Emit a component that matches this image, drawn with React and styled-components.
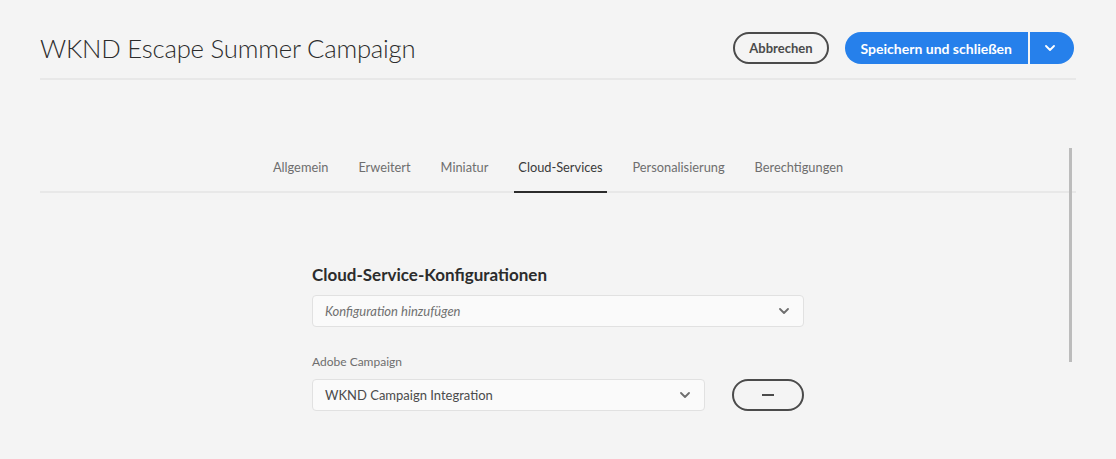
import React, { useState } from "react";
import styled, { createGlobalStyle } from "styled-components";

const GlobalStyle = createGlobalStyle`
  html, body {
    margin: 0;
    padding: 0;
    background: #f4f4f4;
  }
  body {
    font-family: "Lato", "Open Sans", "Liberation Sans", sans-serif;
    color: #2c2c2c;
  }
`;

const Chevron = ({ color = "#6e6e6e", size = 10 }) => (
  <svg width={size} height={size * 0.6} viewBox="0 0 10 6" fill="none">
    <path
      d="M1 1 L5 5 L9 1"
      stroke={color}
      strokeWidth="1.8"
      strokeLinecap="round"
      strokeLinejoin="round"
    />
  </svg>
);

const App = () => {
  const [selectedTab, setSelectedTab] = useState("Cloud-Services");

  const tabs = [
    "Allgemein",
    "Erweitert",
    "Miniatur",
    "Cloud-Services",
    "Personalisierung",
    "Berechtigungen",
  ];

  return (
    <Page>
      <GlobalStyle />
      <Header>
        <Title>WKND Escape Summer Campaign</Title>
        <Actions>
          <OutlineButton>Abbrechen</OutlineButton>
          <SplitButton>
            <PrimaryButton>Speichern und schließen</PrimaryButton>
            <PrimaryToggle aria-label="Mehr">
              <Chevron color="#fff" />
            </PrimaryToggle>
          </SplitButton>
        </Actions>
      </Header>

      <TabBar>
        {tabs.map((tab) => (
          <Tab
            key={tab}
            $active={selectedTab === tab}
            onClick={() => setSelectedTab(tab)}
          >
            {tab}
          </Tab>
        ))}
      </TabBar>

      <Content>
        <SectionHeading>Cloud-Service-Konfigurationen</SectionHeading>
        <Select>
          <SelectText $placeholder>Konfiguration hinzufügen</SelectText>
          <Chevron />
        </Select>

        <FieldLabel>Adobe Campaign</FieldLabel>
        <FieldRow>
          <Select $width="394px">
            <SelectText>WKND Campaign Integration</SelectText>
            <Chevron />
          </Select>
          <RemoveButton aria-label="Entfernen">
            <Minus />
          </RemoveButton>
        </FieldRow>
      </Content>

      <ScrollThumb />
    </Page>
  );
};

const Page = styled.div`
  position: relative;
  height: 459px;
  padding: 0 40px;
  overflow: hidden;
`;

const Header = styled.header`
  display: flex;
  align-items: center;
  justify-content: space-between;
  height: 32px;
  padding: 32px 2px 14px 0;
  border-bottom: 2px solid #e8e8e8;
`;

const Title = styled.h1`
  margin: 0;
  font-size: 25.7px;
  font-weight: 300;
  color: #2c2c2c;
  letter-spacing: -0.2px;
`;

const Actions = styled.div`
  display: flex;
  align-items: center;
  gap: 16px;
`;

const OutlineButton = styled.button`
  height: 32px;
  padding: 0 14px;
  border: 2px solid #4b4b4b;
  border-radius: 16px;
  background: transparent;
  color: #4b4b4b;
  font-family: inherit;
  font-size: 13px;
  font-weight: 700;
  cursor: pointer;
`;

const SplitButton = styled.div`
  display: flex;
  height: 32px;
  gap: 2px;
`;

const PrimaryButton = styled.button`
  height: 32px;
  padding: 0 16px;
  border: none;
  border-radius: 16px 0 0 16px;
  background: #2680eb;
  color: #fff;
  font-family: inherit;
  font-size: 14px;
  font-weight: 700;
  cursor: pointer;
`;

const PrimaryToggle = styled.button`
  display: flex;
  align-items: center;
  justify-content: center;
  width: 44px;
  height: 32px;
  padding: 0 4px 0 0;
  border: none;
  border-radius: 0 16px 16px 0;
  background: #2680eb;
  cursor: pointer;
`;

const TabBar = styled.nav`
  display: flex;
  justify-content: center;
  gap: 22px;
  margin-top: 63px;
  border-bottom: 2px solid #e8e8e8;
`;

const Tab = styled.div`
  display: flex;
  align-items: center;
  height: 48px;
  padding: 0 4px;
  margin-bottom: -2px;
  border-bottom: 2px solid ${(props) => (props.$active ? "#2c2c2c" : "transparent")};
  color: ${(props) => (props.$active ? "#3a3a3a" : "#6e6e6e")};
  font-size: 12.8px;
  cursor: pointer;
`;

const Content = styled.section`
  width: 492px;
  margin: 72px auto 0;
`;

const SectionHeading = styled.h2`
  margin: 0 0 10px;
  font-size: 17px;
  font-weight: 700;
  line-height: 20px;
  color: #2c2c2c;
`;

const Select = styled.div`
  display: flex;
  align-items: center;
  justify-content: space-between;
  box-sizing: border-box;
  width: ${(props) => props.$width || "100%"};
  height: 32px;
  padding: 0 14px 0 12px;
  border: 1px solid #e1e1e1;
  border-radius: 4px;
  background: #fafafa;
`;

const SelectText = styled.span`
  font-size: 13px;
  font-style: ${(props) => (props.$placeholder ? "italic" : "normal")};
  color: ${(props) => (props.$placeholder ? "#707070" : "#4b4b4b")};
`;

const FieldLabel = styled.div`
  margin: 27px 0 10px;
  font-size: 12px;
  line-height: 15px;
  color: #6e6e6e;
`;

const FieldRow = styled.div`
  display: flex;
  align-items: center;
  gap: 27px;
`;

const RemoveButton = styled.button`
  display: flex;
  align-items: center;
  justify-content: center;
  width: 72px;
  height: 32px;
  border: 2px solid #4b4b4b;
  border-radius: 16px;
  background: transparent;
  cursor: pointer;
`;

const Minus = styled.span`
  display: block;
  width: 12px;
  height: 2px;
  background: #4b4b4b;
`;

const ScrollThumb = styled.div`
  position: absolute;
  top: 148px;
  left: 1069px;
  width: 3px;
  height: 214px;
  background: #bcbcbc;
`;

export default App;
